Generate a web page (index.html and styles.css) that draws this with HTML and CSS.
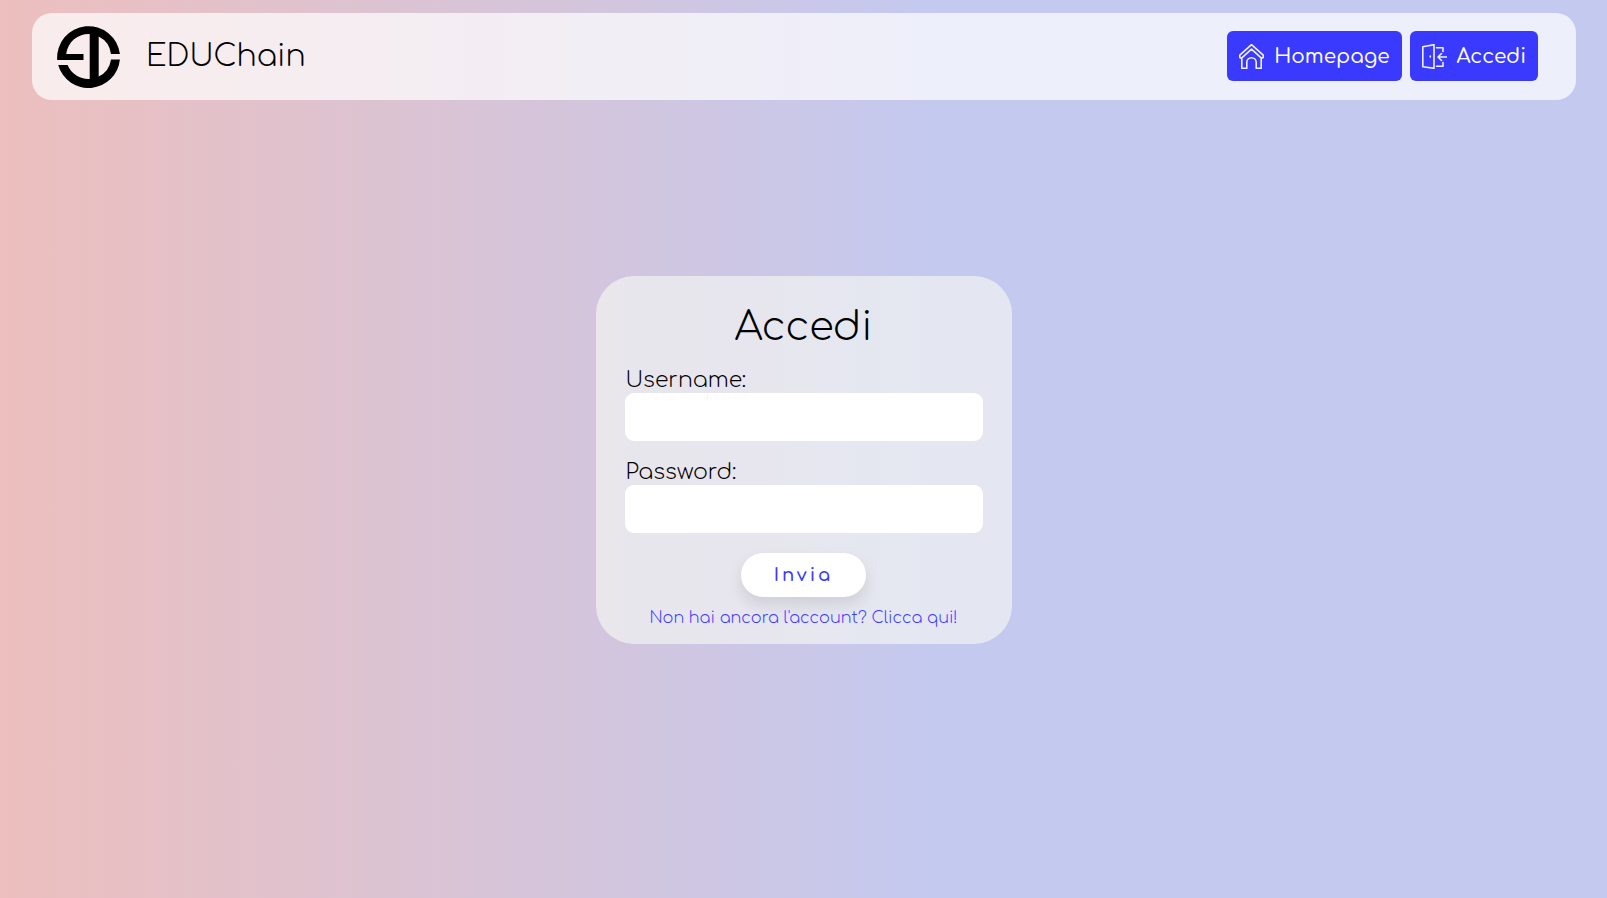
FILE: index.html
```html
<!DOCTYPE html>
<html lang="it">
<head>
<meta charset="utf-8">
<meta name="viewport" content="width=device-width, initial-scale=1">
<title>EDUChain - Accedi</title>
<link rel="stylesheet" href="styles.css">
</head>
<body>
<header class="navbar">
  <a class="brand" href="#">
    <svg class="logo" viewBox="0 0 63 63" aria-hidden="true">
      <path d="M.2 35A31.500 31.500 0 0 1 62.900 29H54A22.500 22.500 0 0 0 41.700 11.400V51.600A22.500 22.500 0 0 0 54 34.500H62.900A31.500 31.500 0 0 1 1.200 40H10.600A22.500 22.500 0 0 0 32.700 54V9A22.500 22.500 0 0 0 9.200 29H26.500V35Z"/>
    </svg>
    <span class="brand-name">EDUChain</span>
  </a>
  <nav class="menu">
    <a class="menu-link" href="#">
      <svg class="icon" viewBox="0 0 25 25" aria-hidden="true">
        <path d="M12.500 .7 .8 11.200V13.500L2.300 14.300 12.500 5.200 22.700 14.300 24.200 13.500V11.200ZM2.800 14.200V24.300H7.800V18.500A4.700 4.700 0 0 1 17.200 18.500V24.300H22.200V14.200"/>
      </svg>
      <span>Homepage</span>
    </a>
    <a class="menu-link" href="#">
      <svg class="icon" viewBox="0 0 25 25" aria-hidden="true">
        <path d="M.8 2.700 12 .7V24.300L.8 22.700ZM8.300 12V13M14.500 3.700H21V7.500M14.500 22.300H21V18.500M24.500 13H16M19.500 9.500 16 13 19.500 16.500"/>
      </svg>
      <span>Accedi</span>
    </a>
  </nav>
</header>
<main class="page">
  <form class="card">
    <h1 class="title">Accedi</h1>
    <label class="label" for="username">Username:</label>
    <input class="field" id="username" name="username" type="text">
    <label class="label" for="password">Password:</label>
    <input class="field" id="password" name="password" type="password">
    <button class="submit" type="submit">Invia</button>
    <a class="signup" href="#">Non hai ancora l'account? Clicca qui!</a>
  </form>
</main>
</body>
</html>
```
FILE: styles.css
```css
* {
  box-sizing: border-box;
}

body {
  margin: 0;
  min-height: 100vh;
  font-family: Comfortaa, Lato, sans-serif;
  font-weight: 300;
  color: #000;
  background: linear-gradient(to right, #edbfbe, #c4c9ef 58%);
}

a {
  text-decoration: none;
}

.navbar {
  display: flex;
  align-items: center;
  justify-content: space-between;
  margin: 13px 31px 0 32px;
  padding: 12px 38px 12px 25px;
  border-radius: 20px;
  background: rgba(255, 255, 255, 0.7);
}

.brand {
  display: flex;
  align-items: center;
  gap: 26px;
  color: #000;
}

.logo {
  width: 63px;
  height: 63px;
}

.brand-name {
  font-size: 30px;
  line-height: 40px;
}

.menu {
  display: flex;
  gap: 8px;
  padding-bottom: 1px;
}

.menu-link {
  display: flex;
  align-items: center;
  gap: 10px;
  height: 50px;
  padding: 0 12px;
  border-radius: 6px;
  font-size: 20px;
  font-weight: 500;
  color: #fff;
  background: #3a3aff;
}

.icon {
  width: 25px;
  height: 25px;
  fill: none;
  stroke: #f0f0ff;
  stroke-width: 1.6;
  stroke-linejoin: round;
  stroke-linecap: round;
}

.page {
  padding: 176px 16px 16px;
}

.card {
  display: flex;
  flex-direction: column;
  max-width: 416px;
  margin: 0 auto;
  padding: 25px 29px 14px;
  border-radius: 38px;
  background: rgba(242, 243, 242, 0.7);
}

.title {
  margin: 0 0 14px;
  font-size: 40px;
  font-weight: 300;
  line-height: 52px;
  text-align: center;
}

.label {
  padding-left: 1px;
  font-size: 22px;
  line-height: 26px;
}

.field {
  width: 100%;
  height: 48px;
  margin: 0 0 18px;
  padding: 0 12px;
  border: 0;
  border-radius: 9px;
  font: inherit;
  font-size: 20px;
  background: #fff;
}

.submit {
  align-self: center;
  width: 125px;
  height: 44px;
  margin-top: 2px;
  padding: 0;
  border: 0;
  border-radius: 22px;
  font: inherit;
  font-size: 18px;
  font-weight: 600;
  letter-spacing: 3px;
  color: #3a3aff;
  background: #fff;
  box-shadow: 0 8px 15px rgba(0, 0, 0, 0.1);
}

.signup {
  margin-top: 9px;
  font-size: 16px;
  line-height: 24px;
  text-align: center;
  color: #3a3aff;
}
```
